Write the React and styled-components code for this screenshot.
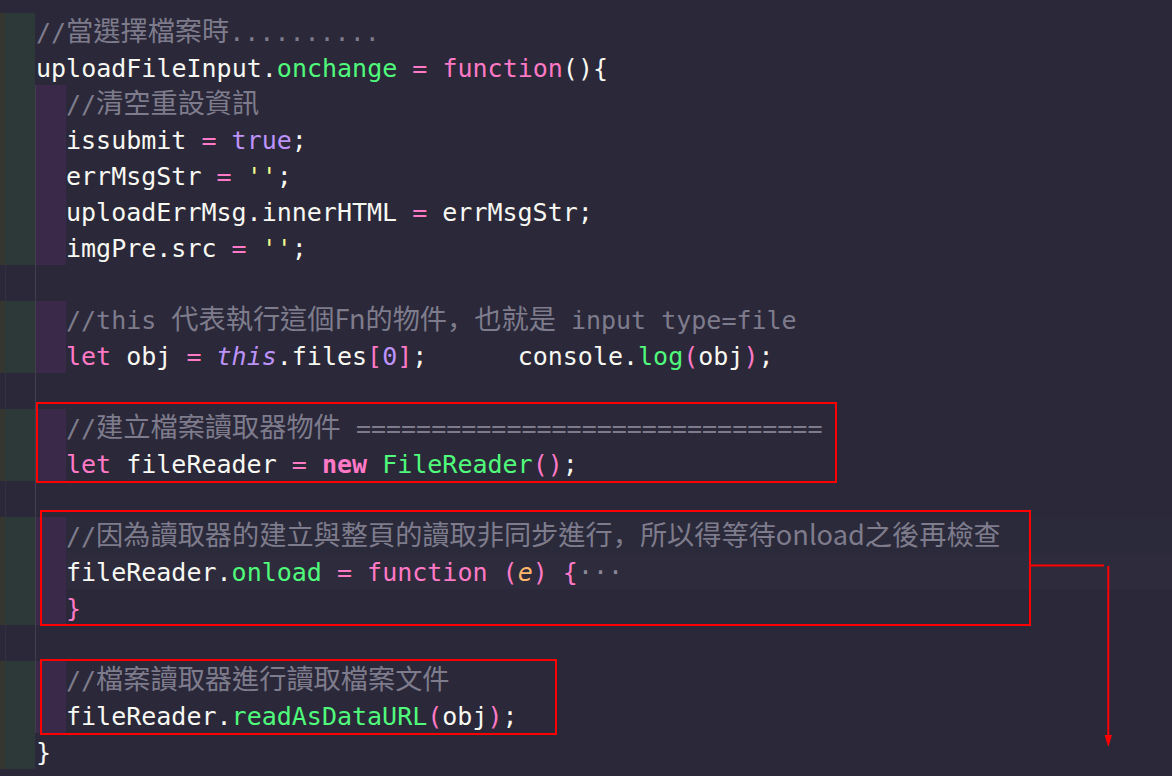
import React from 'react'
import styled, { createGlobalStyle } from 'styled-components'

const Global = createGlobalStyle`
  html, body {
    margin: 0;
    padding: 0;
    background: #2a2839;
  }
  body {
    width: 1172px;
    height: 776px;
    overflow: hidden;
  }
`

const palette = {
  pl: '#f8f8f2',
  kw: '#ff79c6',
  fn: '#50fa7b',
  cm: '#7e7c8c',
  str: '#f1fa8c',
  num: '#bd93f9',
  self: '#bd93f9',
  arg: '#ffb86c',
  fold: '#8b899a'
}

const tints = {
  olive: '#35362f',
  teal: '#2d3839',
  purple: '#3a2949'
}

export default function App() {
  return (
    <Editor>
      <Global />
      <Row level={1}><T $k="cm">//<Han>當選擇檔案時</Han>..........</T></Row>
      <Row level={1}>uploadFileInput.<T $k="fn">onchange</T> <T $k="kw">=</T> <T $k="kw">function</T>(){'{'}</Row>
      <Row level={2}><T $k="cm">//<Han>清空重設資訊</Han></T></Row>
      <Row level={2}>issubmit <T $k="kw">=</T> <T $k="num">true</T>;</Row>
      <Row level={2}>errMsgStr <T $k="kw">=</T> <T $k="str">''</T>;</Row>
      <Row level={2}>uploadErrMsg.innerHTML <T $k="kw">=</T> errMsgStr;</Row>
      <Row level={2}>imgPre.src <T $k="kw">=</T> <T $k="str">''</T>;</Row>
      <Blank />
      <Row level={2}><T $k="cm">//this <Han>代表執行這個Fn的物件<Comma>，</Comma>也就是</Han> input type=file</T></Row>
      <Row level={2}><T $k="kw">let</T> obj <T $k="kw">=</T> <T $k="self">this</T>.files<T $k="kw">[</T><T $k="num">0</T><T $k="kw">]</T>;{'      '}console.<T $k="fn">log</T><T $k="kw">(</T>obj<T $k="kw">)</T>;</Row>
      <Blank />
      <Group>
        <Row level={2}><T $k="cm">//<Han>建立檔案讀取器物件</Han> {'='.repeat(31)}</T></Row>
        <Row level={2}><T $k="kw">let</T> fileReader <T $k="kw">=</T> <T $k="kw" $bold>new</T> <T $k="fn">FileReader</T><T $k="kw">()</T>;</Row>
        <Frame $x={36} $w={801} $top={-7} $bottom={-2} />
      </Group>
      <Blank />
      <Group>
        <Row level={2} hl="soft"><T $k="cm">//<Han>因為讀取器的建立與整頁的讀取非同步進行<Comma>，</Comma>所以得等待onload之後再檢查</Han></T></Row>
        <Row level={2} hl="cur">fileReader.<T $k="fn">onload</T> <T $k="kw">=</T> <T $k="kw">function</T> <T $k="kw">(</T><T $k="arg">e</T><T $k="kw">)</T> <T $k="kw">{'{'}</T><T $k="fold">···</T></Row>
        <Row level={2}><T $k="kw">{'}'}</T></Row>
        <Frame $x={40} $w={991} $top={-7} $bottom={-1} />
      </Group>
      <Blank />
      <Group>
        <Row level={2}><T $k="cm">//<Han>檔案讀取器進行讀取檔案文件</Han></T></Row>
        <Row level={2}>fileReader.<T $k="fn">readAsDataURL</T><T $k="kw">(</T>obj<T $k="kw">)</T>;</Row>
        <Frame $x={40} $w={517} $top={-2} $bottom={-2} />
      </Group>
      <Row level={1}>{'}'}</Row>

      {/* the hand-drawn pointer from the onload box down the right edge */}
      <Arrow width="1172" height="776" viewBox="0 0 1172 776">
        <path d="M1031 565.5H1104" stroke="#ff0000" strokeWidth="2" fill="none" />
        <path d="M1108.3 566V738" stroke="#ff0000" strokeWidth="2" fill="none" />
        <path d="M1104.6 735L1112 735L1108.3 747Z" fill="#ff0000" />
      </Arrow>
    </Editor>
  )
}

function Row({ level, hl, children }) {
  return (
    <Line $hl={hl}>
      <Pad $tint="olive" $w={5} />
      <Pad $tint="teal" $w={30} />
      {level === 2 && <Pad $tint="purple" $w={30} $guide />}
      <Text $lead={level === 2 ? 0 : 1}>{children}</Text>
    </Line>
  )
}

const Editor = styled.div`
  position: relative;
  width: 1172px;
  height: 776px;
  padding-top: 13px;
  box-sizing: border-box;
  background: #2a2839;
  font-family: 'DejaVu Sans Mono', 'Liberation Mono', monospace;
  font-size: 25px;
  color: ${palette.pl};
`

const Line = styled.div`
  display: flex;
  height: 36px;
  background: ${p =>
    p.$hl === 'cur' ? '#2d2b3c' : p.$hl === 'soft' ? '#2b2a3a' : 'transparent'};
`

const Pad = styled.span`
  flex: none;
  width: ${p => p.$w}px;
  height: 36px;
  background: ${p => tints[p.$tint]};
  border-left: ${p => (p.$guide ? '1px solid #403e4d' : 'none')};
`

const Text = styled.span`
  display: block;
  height: 36px;
  line-height: 36px;
  padding-left: ${p => p.$lead}px;
  padding-top: 2px;
  box-sizing: border-box;
  white-space: pre;
`

const Blank = styled.div`
  height: 36px;
  background: linear-gradient(
    to right,
    transparent 5px,
    #33313f 5px 6px,
    transparent 6px 35px,
    #423f50 35px 36px,
    transparent 36px
  );
`

const T = styled.span`
  color: ${p => palette[p.$k] || palette.pl};
  font-style: ${p => (p.$k === 'self' || p.$k === 'arg' ? 'italic' : 'normal')};
  font-weight: ${p => (p.$bold ? 700 : 400)};
`

const Han = styled.span`
  font-family: 'Noto Sans CJK TC', 'Noto Sans CJK JP', sans-serif;
  font-size: 27.2px;
  line-height: 1;
`

const Comma = styled.span`
  font-family: 'Noto Sans CJK JP', 'Noto Sans CJK TC', sans-serif;
`

const Group = styled.div`
  position: relative;
`

const Frame = styled.div`
  position: absolute;
  left: ${p => p.$x}px;
  width: ${p => p.$w}px;
  top: ${p => p.$top}px;
  bottom: ${p => p.$bottom}px;
  box-sizing: border-box;
  border: 2px solid #ff0000;
  pointer-events: none;
`

const Arrow = styled.svg`
  position: absolute;
  left: 0;
  top: 0;
  pointer-events: none;
`
